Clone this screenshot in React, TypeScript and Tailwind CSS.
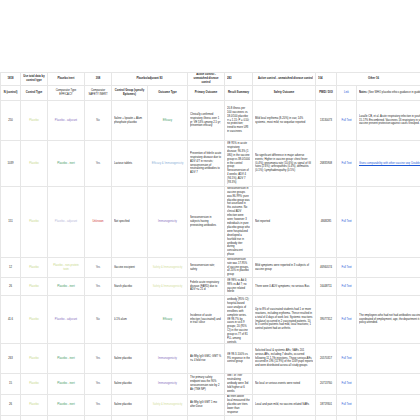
const cols = [20, 27, 37, 27, 36, 40, 37, 28, 63, 21, 20, 110];

type Row = {
  h: number;
  n: string;
  comp: [string, string];
  inert: [string, string];
  group: string;
  out: [string, string];
  prim: string;
  res: string;
  safe: string;
  pmid: string;
  note?: string;
  noteLink?: boolean;
};

const rows: Row[] = [
  { h: 40, n: "250", comp: ["Placebo - adjuvant", "text-[#8a6fc0]"], inert: ["No", "text-gray-600"], group: "Saline + lipoatin + Alum phosphate placebo", out: ["Efficacy", "text-[#3c9a5f]"], prim: "Clinically confirmed respiratory illness over 1 yr; VE 53% among 2-5 yr; prevention efficacy", res: "20.8 illness per 100 vaccinees vs 18.0/100 placebo; rr = 1.15; P = 0.50; no protection; trend to more URI in vaccinees", safe: "Mild local erythema (8-20%) in vax; 14% systemic, most mild; no sequelae reported", pmid: "13130073", note: "Lasalle CB, et al. Acute respiratory infection in youth; a trial of polyvalent virus vaccine; 15-17% Encombined. Vaccinees 16 respiratory in sensible only for influenza A2 phase); vaccine prevent protection against cases Grouped." },
  { h: 46, n: "1039", comp: ["Placebo - inert", "text-[#3c9a5f]"], inert: ["Yes", "text-gray-600"], group: "Lactose tablets", out: ["Efficacy & Immunogenicity", "text-[#8ab0d8]"], prim: "Prevention of febrile acute respiratory disease due to ADV 4/7 in recruits; seroconversion of neutralizing antibodies to ADV 7", res: "VE 95% in acute respiratory disease; 96.3% (1 080) in the vaccine group vs 38.0/1000 in the control group; Seroconversion of 4 weeks; ADV 4 (94.5%), ADV 7 (93.3%)", safe: "No significant difference in major adverse events; Higher in vaccine group: chest fever (0.4%); pneumonia rate (10.6%) vs signal of GI rates (2.6%); arthropathies (0.4%), dermatitis (0.1%); Lymphadenopathy (0.5%)", pmid: "26835908", note: "Gives comparability with other vaccine seq: Double-blind safety Pubmed: 27877475", noteLink: true },
  { h: 71, n: "151", comp: ["Placebo - adjuvant", "text-[#b7b7d8]"], inert: ["Unknown", "text-[#d04040]"], group: "Not specified", out: ["Immunogenicity", "text-[#8a6fc0]"], prim: "Seroconversion in subjects having preexisting antibodies", res: "Seroconversion in vaccine groups was 86-99%; pure placebo group was not assessed in this outcome. No clinical ADV infection were seen; however 3 individuals in pure placebo group who were hospitalized developed a fourfold rise in antibody titer during convalescent phase", safe: "Not reported", pmid: "4848285" },
  { h: 20, n: "12", comp: ["Placebo - non-protein toxin", "text-[#c8d88a]"], inert: ["Yes", "text-gray-600"], group: "Vaccine excipient", out: ["Safety & Immunogenicity", "text-[#d4e0a0]"], prim: "Seroconversion rate; safety", res: "Seroconversion rate was 17-95% of vaccine groups, all 20% in placebo group", safe: "Mild symptoms were reported in 3 subjects of vaccine group", pmid: "46940574" },
  { h: 18, n: "26", comp: ["Placebo - inert", "text-[#3c9a5f]"], inert: ["Yes", "text-gray-600"], group: "Starch placebo", out: ["Safety & Immunogenicity", "text-[#d4e0a0]"], prim: "Febrile acute respiratory disease (FARD) due to ADV <= 21 d", res: "VE 98% vs Ad 4; 98% vs Ad 7; no vaccine related febrile", safe: "There were 0 ADV symptoms; no serious Bas", pmid: "16448711" },
  { h: 48, n: "41.6", comp: ["Placebo - adjuvant", "text-[#8a6fc0]"], inert: ["No", "text-gray-600"], group: "0.1% alum", out: ["Efficacy", "text-[#3c9a5f]"], prim: "Incidence of acute infection (vaccinated) and in trial/ close", res: "VE 44% pts of antibody (95% CI); hospital-based case analysis of enrollees with complete series. VE 98.7% by cases in sick 9 groups; 20 (95% CI) in the vaccine group vs 77 of 81 PLL among controls", safe: "Up to 8% of vaccinated students had 1 or more reactions, including erythema. These resulted in a total of 4 days of work lost. Systemic reactions (malaise) occurred in 2 vaccinated patients. 10 to 3 control patients had mild, local reactions; 1 control patient had an arthritis", pmid: "39077312", note: "The employees who had not had antibodies vaccine had considerably equal group a coordinated of employment, age, the department it existed employee, and the specific policy attended." },
  { h: 30, n: "263", comp: ["Placebo - inert", "text-[#3c9a5f]"], inert: ["Yes", "text-gray-600"], group: "Saline placebo", out: ["Immunogenicity", "text-[#8a6fc0]"], prim: "Ab Mfg IgG GMC; GMT % >= 4 fold rise", res: "VE 98.3-100% vs 9% response in the control group", safe: "Solicited local & systemic AEs; SAEs 201 serious AEs, including 7 deaths, occurred following 11 1.7th injections. Those serious AEs occurred in 196 (11.9%) of the 1169 pupil reports and were distributed across all study groups", pmid: "20570317" },
  { h: 21, n: "15", comp: ["Placebo - inert", "text-[#3c9a5f]"], inert: ["Yes", "text-gray-600"], group: "Saline placebo", out: ["Immunogenicity", "text-[#8a6fc0]"], prim: "The primary safety endpoint was the 90% seroconversion rate by 2 Ab (TNE NP)", res: "GMT of Ther neutralizing antibody were 3rd fold higher at 6 weeks", safe: "No local or serious events were noted", pmid: "20713760" },
  { h: 21, n: "26", comp: ["Placebo - inert", "text-[#3c9a5f]"], inert: ["Yes", "text-gray-600"], group: "Saline placebo", out: ["Safety & Immunogenicity", "text-[#d4e0a0]"], prim: "Ab Mfg IgG GMT 1 mo after Dose", res: "All then above local measured the placebo are titers lower than response", safe: "Local and pain mild, no vaccine-related SAEs", pmid: "18719301" },
  { h: 20, n: "30", comp: ["Placebo - inert", "text-[#3c9a5f]"], inert: ["Yes", "text-gray-600"], group: "Saline placebo", out: ["Immunogenicity", "text-[#8a6fc0]"], prim: "Ab Mfg IgG GMC", res: "Ab 1.86 95 CI range", safe: "Comparable between RD and Moderna; to", pmid: "2011841" },
];

const cell = "border border-[#e6e6e6] px-[2px] p-0 align-middle";

function Box({ h, className = "", children }: { h: number; className?: string; children: React.ReactNode }) {
  return (
    <div className={`flex items-center overflow-hidden ${className}`} style={{ height: h - 1 }}>
      <div className="w-full">{children}</div>
    </div>
  );
}

export default function App() {
  return (
    <div className="h-[420px] w-[420px] overflow-hidden bg-white pt-[72px] text-[2.7px] leading-[3.9px] text-[#222]" style={{ fontFamily: "'Liberation Sans', Arial, sans-serif" }}>
      <table className="table-fixed border-collapse" style={{ width: cols.reduce((a, b) => a + b, 0) }}>
        <colgroup>
          {cols.map((w, i) => (
            <col key={i} style={{ width: w }} />
          ))}
        </colgroup>
        <tbody>
          <tr className="font-bold">
            <td className={`${cell} text-center`}><Box h={13}>1818</Box></td>
            <td className={`${cell} text-center`}><Box h={13}>Use total data by control type</Box></td>
            <td className={`${cell} text-center`}><Box h={13}>Placebo inert</Box></td>
            <td className={`${cell} text-center`}><Box h={13}>308</Box></td>
            <td className={`${cell} text-center`} colSpan={2}><Box h={13}>Placebo/adjuvant 93</Box></td>
            <td className={`${cell} text-center`}><Box h={13}>Active control - unmatched disease control</Box></td>
            <td className={cell}><Box h={13}>283</Box></td>
            <td className={`${cell} text-right`}><Box h={13}>Active control - unmatched disease control</Box></td>
            <td className={cell}><Box h={13}>104</Box></td>
            <td className={cell} colSpan={2}><Box h={13}><div className="w-[40px] text-right">Other 16</div></Box></td>
          </tr>
          <tr className="text-center">
            <td className={`${cell} font-bold`}><Box h={15}>N (control)</Box></td>
            <td className={`${cell} font-bold`}><Box h={15}>Control Type</Box></td>
            <td className={cell}><Box h={15}>Comparator Type EFFICACY</Box></td>
            <td className={cell}><Box h={15}>Comparator SAFETY INERT</Box></td>
            <td className={`${cell} font-bold`}><Box h={15}>Control Group (specify Epitomes)</Box></td>
            <td className={`${cell} font-bold`}><Box h={15}>Outcome Type</Box></td>
            <td className={`${cell} font-bold`}><Box h={15}>Primary Outcome</Box></td>
            <td className={`${cell} font-bold`}><Box h={15}>Result Summary</Box></td>
            <td className={`${cell} font-bold`}><Box h={15}>Safety Outcome</Box></td>
            <td className={`${cell} font-bold`}><Box h={15}>PMID / DOI</Box></td>
            <td className={`${cell} text-[#1a56d6]`}><Box h={15}>Link</Box></td>
            <td className={`${cell} text-left`}><Box h={15}><b>Notes:</b> (See WHO placebo ethics guidance in guidelines doc)</Box></td>
          </tr>
          {rows.map((r, i) => (
            <tr key={i}>
              <td className={`${cell} text-center`}><Box h={r.h}>{r.n}</Box></td>
              <td className={`${cell} text-center text-[#c8d88a]`}><Box h={r.h}>Placebo</Box></td>
              <td className={`${cell} text-center ${r.comp[1]}`}><Box h={r.h}>{r.comp[0]}</Box></td>
              <td className={`${cell} text-center ${r.inert[1]}`}><Box h={r.h}>{r.inert[0]}</Box></td>
              <td className={cell}><Box h={r.h}>{r.group}</Box></td>
              <td className={`${cell} text-center ${r.out[1]}`}><Box h={r.h}>{r.out[0]}</Box></td>
              <td className={cell}><Box h={r.h}>{r.prim}</Box></td>
              <td className={cell}><Box h={r.h}>{r.res}</Box></td>
              <td className={cell}><Box h={r.h}>{r.safe}</Box></td>
              <td className={`${cell} text-center`}><Box h={r.h}>{r.pmid}</Box></td>
              <td className={`${cell} text-center text-[#1a56d6]`}><Box h={r.h}>Full Text</Box></td>
              <td className={`${cell} ${r.noteLink ? "text-[#1a56d6] underline" : ""}`}><Box h={r.h}>{r.note ?? ""}</Box></td>
            </tr>
          ))}
        </tbody>
      </table>
    </div>
  );
}
